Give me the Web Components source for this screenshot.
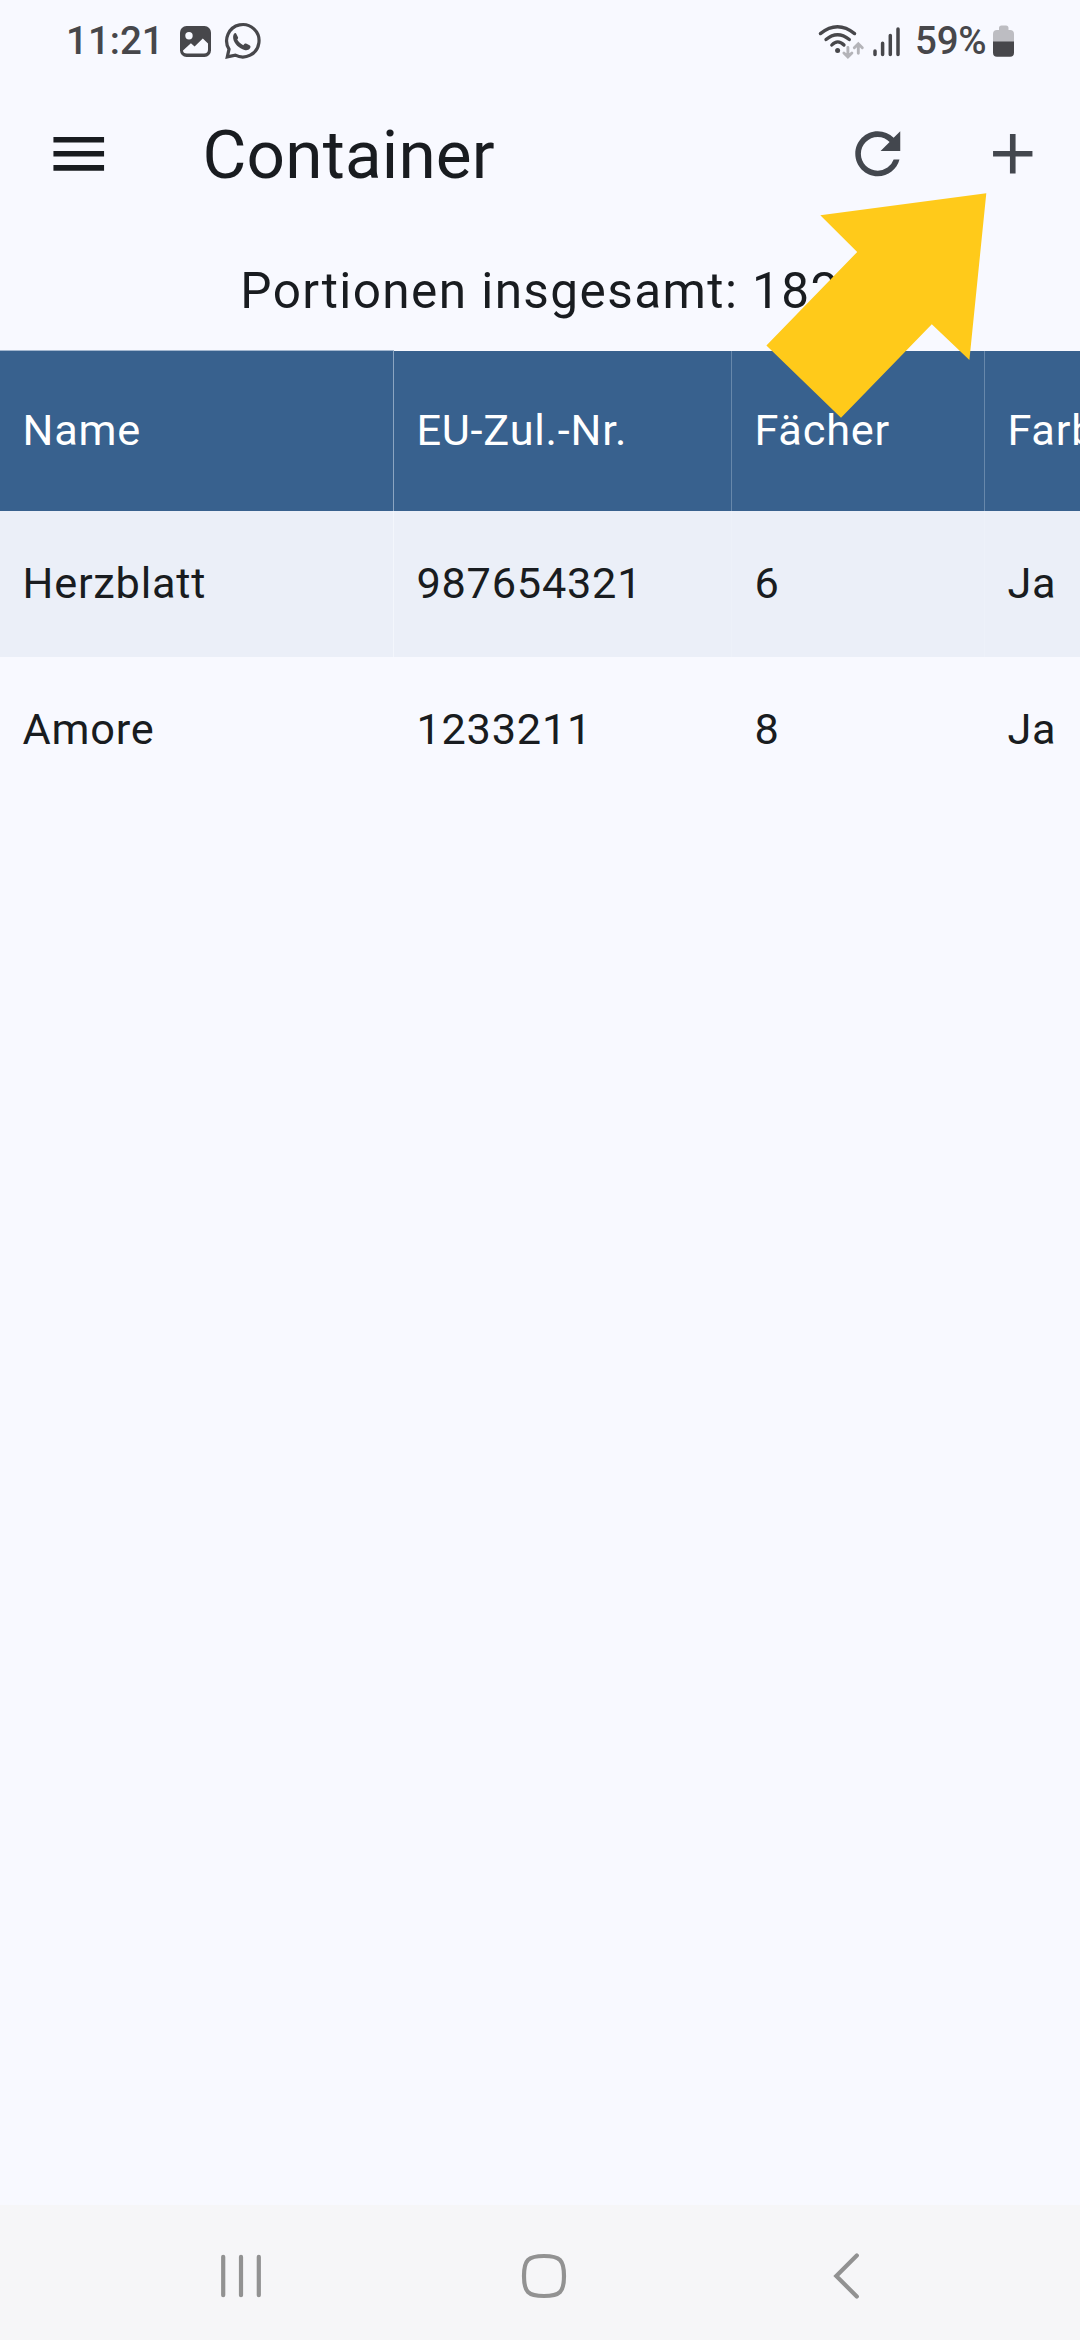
<!DOCTYPE html>
<html lang="de">
<head>
<meta charset="utf-8">
<title>Container</title>
<style>
html,body{margin:0;padding:0;height:100%}
body{background:#f8f9ff;overflow:hidden;font-family:Roboto,"Liberation Sans",sans-serif;color:#191c20}
</style>
</head>
<body>
<app-screen></app-screen>
<script>
const define = (name, html, setup) => customElements.define(name, class extends HTMLElement {
  constructor() {
    super();
    const t = document.createElement('template');
    t.innerHTML = html;
    this.attachShadow({ mode: 'open' }).append(t.content.cloneNode(true));
  }
  connectedCallback() { if (setup) setup(this); }
});

define('status-bar', `
<style>
:host{display:flex;height:76px;box-sizing:border-box;padding:4px 64px 0 66px;justify-content:space-between;align-items:flex-start;color:#47474b;font-size:38.5px;font-weight:500;line-height:74px}
div{display:flex;height:74px}
svg{display:block;height:74px;flex:none}
.pct{width:77px;letter-spacing:-.2px}
.time{width:108px}
</style>
<div>
  <span class="time">11:21</span>
  <svg width="90" height="74" viewBox="174 4 90 74">
    <rect x="180" y="26" width="31" height="31" rx="6.5" fill="#47474b"/>
    <circle cx="189" cy="35.7" r="3.7" fill="#f8f9ff"/>
    <path d="M183 50.5L190.9 43.2L194.6 46.6L202.8 38.4L208 43.6V49.5Q208 53.5 204 53.5H187Q183 53.5 183 50.5Z" fill="#f8f9ff"/>
    <path d="M227.3 56.8L229 49.2A16.2 16.2 0 1 1 235.3 55.1Z" fill="none" stroke="#47474b" stroke-width="3.2" stroke-linejoin="miter"/>
    <path transform="translate(222.8 21.8) scale(1.6)" d="M8.4 7.4L9.5 9.6C9.7 10 9.5 10.5 9 11.1C9.9 12.7 11.1 13.9 12.8 14.6C13.4 13.8 13.9 13.4 14.5 13.6L16.7 14.6C17.6 15.1 17.4 16 16.9 16.7C16.2 17.6 15 18 13.6 17.6C10.2 16.7 7 13.6 6.5 10.4C6.3 9 6.7 7.7 7.4 7.2C7.8 6.9 8.2 7 8.4 7.4Z" fill="#47474b"/>
  </svg>
</div>
<div>
  <svg width="98" height="74" viewBox="817 4 98 74">
    <g fill="none" stroke="#47474b" stroke-width="3.3" stroke-linecap="round">
      <path d="M820.4 33.6Q837.5 19.9 854.6 33.6"/>
      <path d="M826 39.6Q837.5 29.8 849.3 39.6"/>
      <path d="M831.8 45Q837.7 38.6 844 45"/>
    </g>
    <circle cx="837.6" cy="50.5" r="2.5" fill="#47474b"/>
    <path d="M847.9 47.5V56.3M843.9 53L847.9 57L851.9 53M858.3 53.3V44.5M854.3 47.8L858.3 43.8L862.3 47.8" fill="none" stroke="#b4b4b9" stroke-width="2.9" stroke-linecap="round"/>
    <path d="M875 51V54.4M882.6 43.3V54.4M890.3 35.6V54.4M898 29V54.4" fill="none" stroke="#47474b" stroke-width="3.5" stroke-linecap="round"/>
  </svg>
  <span class="pct">59%</span>
  <svg width="24" height="74" viewBox="992 4 24 74">
    <path d="M993 43V34Q993 30 997 30H999V28Q999 25.5 1001.5 25.5H1006Q1008.5 25.5 1008.5 28V30H1010Q1014 30 1014 34V43Z" fill="#bdbdc2"/>
    <path d="M993 41.5H1014V52.5Q1014 56.8 1010 56.8H997Q993 56.8 993 52.5Z" fill="#47474b"/>
  </svg>
</div>`);

define('icon-button', `
<style>
:host{display:flex;width:135px;height:156px;align-items:center;justify-content:center;flex:none;color:#43474e}
::slotted(svg){display:block;width:67.5px;height:67.5px;fill:currentColor}
</style><slot></slot>`);

define('app-bar', `
<style>
:host{display:flex;height:156px;align-items:center}
.menu{width:157.5px;color:#191c20}
.title{flex:1;padding:1px 0 0 45px;font-size:67.5px;letter-spacing:.16px;line-height:80px}
</style>
<icon-button class="menu"><svg viewBox="0 0 24 24"><path d="M3 18h18v-2H3v2zm0-5h18v-2H3v2zm0-7v2h18V6H3z"/></svg></icon-button>
<div class="title"><slot></slot></div>
<icon-button><svg viewBox="0 0 24 24"><path d="M17.65 6.35A7.958 7.958 0 0 0 12 4c-4.42 0-7.99 3.58-7.99 8s3.57 8 7.99 8c3.73 0 6.84-2.55 7.73-6h-2.08A5.99 5.99 0 0 1 12 18c-3.31 0-6-2.69-6-6s2.69-6 6-6c1.66 0 3.14.69 4.22 1.78L13 11h7V4l-2.35 2.35z"/></svg></icon-button>
<icon-button><svg viewBox="0 0 24 24"><path d="M19 13h-6v6h-2v-6H5v-2h6V5h2v6h6v2z"/></svg></icon-button>`);

define('portion-total', `
<style>
:host{display:flex;height:118px;align-items:center;justify-content:center;font-size:49.5px;letter-spacing:1.406px;white-space:nowrap;line-height:60px}
</style><span><slot></slot></span>`);

define('table-cell', `
<style>
:host{display:flex;align-items:center;box-sizing:border-box;height:100%;flex:none;white-space:nowrap;padding-left:22.4px;border-right:1px solid var(--line)}
:host(:nth-child(1)){width:394px;padding-left:22.5px;border-right-color:var(--line-first);box-shadow:0 -1px 0 var(--top,transparent)}
:host(:nth-child(2)){width:338px}
:host(:nth-child(3)){width:253px}
:host(:nth-child(4)){width:220px;border-right:0}
</style><slot></slot>`);

define('table-row', `
<style>
:host{display:flex;height:146px;overflow:hidden;font-size:43.3px;letter-spacing:.77px;line-height:52px;--line:transparent;--line-first:transparent}
:host([kind=head]){height:160px;overflow:visible;background:#38618e;color:#fff;--line:#6788ab;--line-first:#8ba5c1;--top:#a3b7cf}
:host([kind=odd]){background:#ebeff8;--line:#edf1f9;--line-first:#f3f6fc}
</style><slot></slot>`);

define('container-table', `
<style>
:host{display:block;width:1080px;padding-top:1px;overflow:hidden}
</style>
<div id="rows"></div>`, el => {
  const rows = [
    ['head', 'Name', 'EU-Zul.-Nr.', 'Fächer', 'Farbe'],
    ['odd', 'Herzblatt', '987654321', '6', 'Ja'],
    ['even', 'Amore', '1233211', '8', 'Ja'],
  ];
  for (const [kind, ...cells] of rows) {
    const row = document.createElement('table-row');
    row.setAttribute('kind', kind);
    for (const text of cells) {
      const cell = document.createElement('table-cell');
      cell.textContent = text;
      row.append(cell);
    }
    el.shadowRoot.getElementById('rows').append(row);
  }
});

define('nav-bar', `
<style>
:host{display:flex;height:135px;background:#f6f6f8;align-items:center;padding:0 83px 0 90px;box-sizing:border-box;justify-content:space-between;flex:none}
svg{display:block;fill:none;stroke:#929292;stroke-width:4.2;stroke-linecap:round}
</style>
<svg width="302" height="135" viewBox="90 2205 302 135"><path d="M223.2 2256.8V2295.2M241 2256.8V2295.2M258.8 2256.8V2295.2"/></svg>
<svg width="302" height="135" viewBox="392 2205 302 135"><path d="M543 2256C559 2256 563 2260 563 2276S559 2296 543 2296S523 2292 523 2276S527 2256 543 2256Z"/></svg>
<svg width="302" height="135" viewBox="695 2205 302 135"><path d="M856.8 2255.5L836.3 2276L856.8 2296.5" stroke-linejoin="miter"/></svg>`);

define('pointer-arrow', `
<style>
:host{display:block;position:absolute;left:766px;top:193px;width:221px;height:225px}
svg{display:block}
</style>
<svg width="221" height="225" viewBox="766 193 221 225"><path d="M986.3 193.2L820.3 215.3L857.2 252L766.4 345.5L841 417.7L931.8 324.2L969.4 360Z" fill="#ffca1a"/></svg>`);

define('app-screen', `
<style>
:host{display:flex;flex-direction:column;width:1080px;height:2340px;position:relative;overflow:hidden;background:#f8f9ff}
main{flex:1}
</style>
<status-bar></status-bar>
<app-bar>Container</app-bar>
<portion-total>Portionen insgesamt: 182</portion-total>
<main><container-table></container-table></main>
<nav-bar></nav-bar>
<pointer-arrow></pointer-arrow>`);
</script>
</body>
</html>
